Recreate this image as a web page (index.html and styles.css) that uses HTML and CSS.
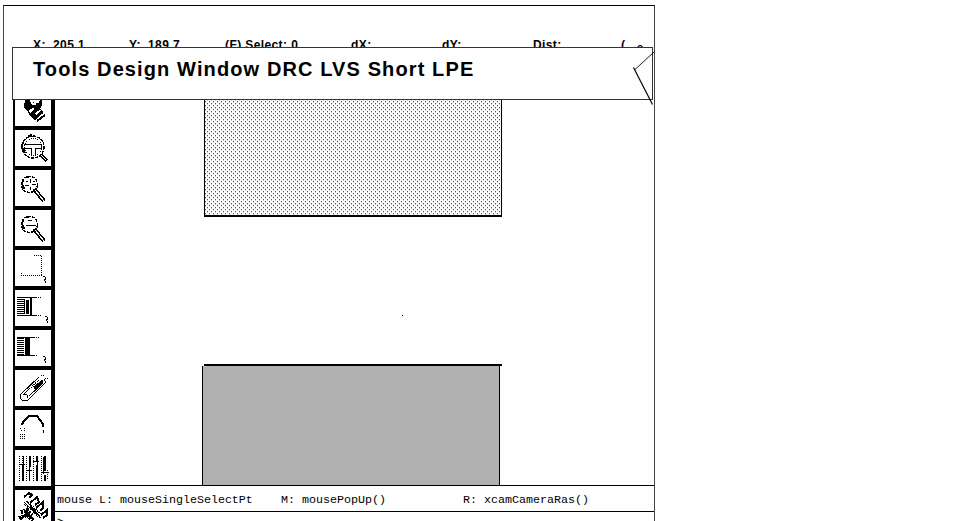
FILE: index.html
```html
<!DOCTYPE html>
<html lang="en">
<head>
<meta charset="utf-8">
<title>Layout editor</title>
<link rel="stylesheet" href="styles.css">
</head>
<body>
<div class="window">
  <div class="status">
    <span>X:</span><span>205.1</span><span>Y:</span><span>189.7</span><span>(F) Select: 0</span><span>dX:</span><span>dY:</span><span>Dist:</span><span>(</span><span class="low">o</span>
  </div>
  <nav class="menu">
    <span>Tools</span> <span>Design</span> <span>Window</span> <span>DRC</span> <span>LVS</span> <span>Short</span> <span>LPE</span>
    <svg class="cursor" width="24" height="56" viewBox="0 0 24 56"><path d="M21 2 2 19.500" stroke-width=".9"/><path d="M.5 17.500 19.500 54.500" stroke-width="1.200"/></svg>
  </nav>
  <div class="body">
    <div class="tools">
      <div class="tool first"><svg viewBox="0 0 36 36"><path class="fill" d="M10 10h5l2 3 3-3 3 4 2-4h2v5l-2 4 3 3-3 4-5 4-4-3-3-5-4-5z"/><path class="white" d="M14 9h2l2 5 3-5h2l-2 6h-4zM14 20l4-2 2 1-5 4zM20 23l5-3 1 1-5 4z"/><path class="thick" d="m19 28 9-6M22 31l8-6"/></svg></div>
      <div class="tool"><svg viewBox="0 0 36 36"><circle cx="18" cy="17" r="11" class="lens"/><path class="thick" d="M8 12q-2 6 2 11M13 6l4-1"/><circle cx="18" cy="17" r="8.500" class="dots"/><path d="M10 14.500h16v4h-6v7M10 18.500h6v7"/><path class="handle" d="m26 25 6 6"/><path class="white-line" d="m26 25 5 5"/></svg></div>
      <div class="tool"><svg viewBox="0 0 36 36"><circle cx="14.500" cy="14.500" r="8" class="lens"/><path class="thick" d="M8 10q-2 5 2 9M11 7h3"/><path d="M15.500 9v4M10 15.500h4M17 14.500h4M15.500 17v3M11 11h2M18 11h2"/><path class="handle" d="m19 19 10 12"/><path class="white-line" d="m20 20 9 11"/></svg></div>
      <div class="tool"><svg viewBox="0 0 36 36"><circle cx="14.500" cy="14.500" r="8" class="lens"/><path class="thick" d="M8 10q-2 5 2 9M11 7h3"/><path d="M11 15.500h10M13 10.500h4"/><path class="handle" d="m19 19 10 12"/><path class="white-line" d="m20 20 9 11"/></svg></div>
      <div class="tool"><svg viewBox="0 0 36 36"><path class="dots" d="M18.500 5.500h8v20h-20v-3"/><path d="M28 26.500h2M30.500 27v3M29.500 29v2M30.500 31v2"/></svg></div>
      <div class="tool"><svg viewBox="0 0 36 36"><path d="M2 7.500h20M2 25.500h20"/><path class="dots" d="M23 7.500h4M23 25.500h3"/><path class="rungs" d="M6 9v16"/><path class="fill" d="M11 10h3v14h-3zM15 8h2v18h-2z"/><path d="M9.500 9v15"/><path d="M30 26.500h2M32.500 27v3M31.500 29v2M32.500 31v2"/></svg></div>
      <div class="tool"><svg viewBox="0 0 36 36"><path d="M2 7.500h18M2 25.500h18"/><path class="dots" d="M21 7.500h4M21 25.500h2"/><path class="rungs" d="M6 8v18"/><path class="fill" d="M10 8h5v18h-5z"/><path class="white-line dots" d="M9.500 8v18"/><path d="M28 26.500h2M30.500 27v3M29.500 29v2M30.500 31v2"/></svg></div>
      <div class="tool"><svg viewBox="0 0 36 36"><path d="m6 24 18-17M13 30 30 13M6 24q-2 4 1 6t6 0M9 24q4 0 4 4M29 9q2 2 1 4"/><path class="dots" d="M10 23 26 8M8 25l7-7"/><path class="dots" d="M26 5.500h3M30 8.500h3"/><path stroke-width="3" d="m19 18 9-7"/><path d="m14 26 14-13"/></svg></div>
      <div class="tool"><svg viewBox="0 0 36 36"><path class="thick" d="m7 15 1-3 3-3 3-3h8l3 4 3 4v3"/><path d="M28.500 20v3M5 18.500h1m3 0h1M6 20.500h1m2 0h1"/><path class="dots" d="M5 24.500h6M5 26.500h6M5 28.500h6"/></svg></div>
      <div class="tool"><svg viewBox="0 0 36 36"><path class="dots" d="M4.500 6v25M11.500 6v25M18.500 6v25M26.500 6v25M32.500 20v10M7.500 6v8M14.500 18v13"/><path class="thick" d="M8 14v17M15 6v11M22 6v5M22 15v16M30 6v15M30 25v6"/><path d="M4 14.500h6M8.500 6v8M12 20.500h5M14.500 17v14M18 11.500h6M22.500 6v25M26 22.500h8M28.500 7v17"/></svg></div>
      <div class="tool last"><svg viewBox="0 0 36 36"><path class="thick" d="m9 7 5-4 3 2-3 3M15 13l7-6 2 5-4 3M21 18l7-6v6l-3 3M26 25l6-5v5l-4 3"/><path d="m9 12 17 16M11 11l14 15"/><path class="dots" d="m9 14 17 15M12 11l17 16"/><path class="handle dots" d="m6 22 6-2 6 6M4 28l8-3 6 6"/><path class="thick" d="m5 30 7-7 7 7"/></svg></div>
    </div>
    <div class="work">
      <div class="canvas">
        <svg width="599" height="385" viewBox="55 100 599 385">
          <defs>
            <pattern id="stipple" width="4" height="4" patternUnits="userSpaceOnUse"><path class="white" d="M0 0h4v4H0z"/><path fill="#505050" d="M1 1h1v1H1zM3 3h1v1H3z"/><path fill="#ccc" d="M1 2h1v1H1zM3 0h1v1H3z"/></pattern>
            <pattern id="grain" width="4" height="6" patternUnits="userSpaceOnUse"><path fill="#b2b2b2" d="M0 0h4v6H0z"/><path fill="#b0adb0" d="M1 0h1v3H1zM3 3h1v3H3z"/></pattern>
          </defs>
          <path fill="url(#stipple)" d="M205 100h296v115H205z"/>
          <path class="fill" d="M204 100h1v117h-1zM501 100h1v117h-1zM204 215h298v2H204zM402 315h1v1h-1z"/>
          <path fill="url(#grain)" d="M203 366h296v119H203z"/>
          <path class="fill" d="M202 366h1v119h-1zM499 366h1v119h-1zM204 364h298v2H204z"/>
        </svg>
      </div>
      <div class="hints"><span>mouse L: mouseSingleSelectPt</span><span>M: mousePopUp()</span><span>R: xcamCameraRas()</span></div>
      <div class="prompt">&gt;</div>
    </div>
  </div>
</div>
</body>
</html>
```
FILE: styles.css
```css
* { box-sizing: border-box; }
body {
  margin: 0;
  height: 521px;
  overflow: hidden;
  background: #fefefe;
  color: #000;
  font-family: "Liberation Sans", Arial, sans-serif;
}
.window {
  width: 652px;
  height: 516px;
  margin: 5px 0 0 3px;
  border: 1px solid #000;
  border-bottom: 0;
  border-left-color: #444;
  border-right-color: #444;
  overflow: hidden;
}
.status {
  display: grid;
  grid-template-columns: 20px 76px 19px 77px 126px 91px 91px 88px 16px 13px;
  height: 41px;
  padding: 32px 0 0 29px;
  overflow: hidden;
  font-size: 12px;
  line-height: 14px;
  font-weight: bold;
  letter-spacing: 0.400px;
  white-space: nowrap;
}
.low { padding-top: 3px; font-size: 10px; }
.menu {
  position: relative;
  height: 53px;
  margin: 0 1px 0 8px;
  padding: 9px 0 0 20px;
  border: 1px solid #333;
  font-size: 20px;
  line-height: 25px;
  font-weight: bold;
  letter-spacing: 1.110px;
  white-space: nowrap;
}
.cursor { position: absolute; left: 620px; top: 2px; overflow: visible; fill: none; stroke: #000; }
.body { display: flex; height: 421px; padding-left: 9px; }
.tools {
  display: flex;
  flex-direction: column;
  gap: 4px;
  width: 42px;
  flex: none;
  padding: 0 4px 0 2px;
  background: #000;
  overflow: hidden;
}
.tool { flex: none; width: 36px; height: 36px; background: #fefefe; overflow: hidden; }
.first { display: flex; align-items: flex-end; height: 26px; }
.tool svg { display: block; flex: none; width: 36px; height: 36px; fill: none; stroke: #000; shape-rendering: crispEdges; }
.tool .fill, .fill { fill: #000; stroke: none; }
.tool .white, .white { fill: #fefefe; stroke: none; }
.white-line { stroke: #fefefe; }
.thick { stroke-width: 2; }
.handle { stroke-width: 4; }
.lens { stroke-width: 1.500; stroke-dasharray: 3 1; }
.dots { stroke-dasharray: 1 1; }
.thick.dots { stroke-dasharray: 3 1; }
.handle.dots { stroke-dasharray: 2 1; }
.rungs { stroke-width: 8; stroke-dasharray: 1 1; }
.work { flex: 1; min-width: 0; }
.canvas { height: 385px; overflow: hidden; }
.canvas svg { display: block; shape-rendering: crispEdges; }
.hints {
  display: grid;
  grid-template-columns: 224px 182px 1fr;
  height: 27px;
  padding: 6px 0 0 2px;
  border: solid #000;
  border-width: 1px 0;
  font-family: "Liberation Mono", monospace;
  font-size: 11.667px;
  line-height: 16px;
  white-space: pre;
}
.prompt { padding: 4px 0 0 2px; font: 12px/14px "Liberation Mono", monospace; }
```
